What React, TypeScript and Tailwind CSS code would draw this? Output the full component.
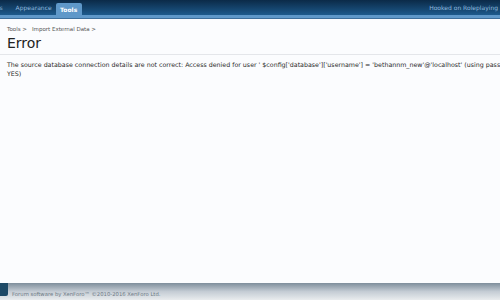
export default function App() {
  return (
    <div
      className="w-[500px] h-[300px] overflow-hidden bg-[#fbfcfe] flex flex-col"
      style={{ fontFamily: '"DejaVu Sans", Verdana, sans-serif' }}
    >
      {/* top navigation */}
      <div className="h-[15px] shrink-0 flex items-end bg-gradient-to-b from-[#0b2a48] to-[#1d5a8c]">
        <span className="text-[6px] text-[#8fb8dc] pr-[7px] pb-[3px] -ml-[3px]">rs</span>
        <span className="text-[6px] text-[#8fb8dc] pl-[6px] pr-[4px] pb-[3px]">Appearance</span>
        <span className="h-[12px] w-[26px] bg-[#5f98c9] rounded-t-[2px] text-[6px] font-bold text-white flex items-center justify-center">
          Tools
        </span>
        <span className="ml-auto text-[6px] text-[#8fb8dc] pb-[3px] pr-[2px]">Hooked on Roleplaying</span>
      </div>
      <div className="h-[3px] shrink-0 bg-[#5f98c9]" />
      <div className="h-px shrink-0 bg-[#3d6f9c]" />

      {/* content */}
      <div className="flex-1 px-[7px] pt-[6px]">
        <div className="text-[5.5px] text-[#555] flex gap-[5px]">
          <span>Tools &gt;</span>
          <span>Import External Data &gt;</span>
        </div>
        <h1 className="text-[14px] leading-[16px] text-[#222] mt-[2px]">Error</h1>
        <div className="h-px bg-[#e4e6ea] mt-[3px] -mx-[7px]" />
        <div className="text-[6.3px] text-[#2a2a2a] mt-[5px] leading-[9px] whitespace-nowrap">
          <div>
            The source database connection details are not correct: Access denied for user ' $config['database']['username'] = 'bethannm_new'@'localhost' (using password:
          </div>
          <div>YES)</div>
        </div>
      </div>

      {/* footer */}
      <div className="h-[17px] shrink-0 relative bg-gradient-to-b from-[#7e8e9c] via-[#c4ccd4] to-[#e9ecee]">
        <div className="absolute left-0 top-0 w-[8px] h-[13px] bg-[#1d4966] rounded-br-[2px]" />
        <div className="absolute left-[12px] bottom-[1px] text-[5.3px] text-[#6e7a86]">
          Forum software by XenForo™ ©2010-2016 XenForo Ltd.
        </div>
      </div>
    </div>
  );
}
